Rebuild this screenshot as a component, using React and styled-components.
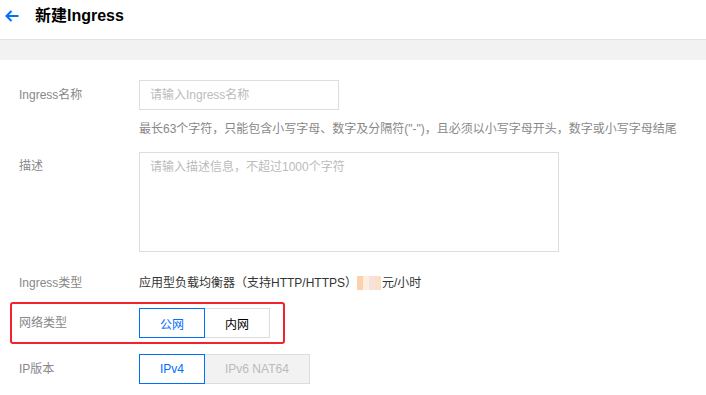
import styled, { createGlobalStyle } from "styled-components";

const GlobalStyle = createGlobalStyle`
  body {
    margin: 0;
    background: #fff;
    font-family: "Liberation Sans", Arial, "Noto Sans CJK SC", sans-serif;
    font-size: 12px;
    color: #333;
  }
`;

const Page = styled.div`
  width: 706px;
  height: 395px;
  overflow: hidden;
`;

const Header = styled.div`
  height: 40px;
  box-sizing: border-box;
  border-bottom: 1px solid #e2e2e2;
  display: flex;
  align-items: flex-start;
  padding: 8px 0 0 5px;
  gap: 16px;
`;

const BackIcon = styled.svg`
  width: 14px;
  height: 14px;
  margin-top: 1px;
`;

const Title = styled.h1`
  margin: 0;
  font-size: 16px;
  line-height: 16px;
  font-weight: bold;
  color: #000;
`;

const Band = styled.div`
  height: 20px;
  background: #f2f2f2;
`;

const Form = styled.div`
  padding: 20px 0 0 19px;
  display: flex;
  flex-direction: column;
`;

const Row = styled.div`
  display: flex;
  align-items: ${({ $top }) => ($top ? "flex-start" : "center")};
  margin-top: ${({ $mt }) => $mt || 0}px;
  min-height: ${({ $h }) => $h || 30}px;
`;

const Label = styled.div`
  width: 120px;
  flex-shrink: 0;
  color: #888;
  line-height: 18px;
  padding-top: ${({ $pt }) => $pt || 0}px;
`;

const Input = styled.input`
  width: 200px;
  height: 30px;
  box-sizing: border-box;
  border: 1px solid #ddd;
  padding: 0 10px;
  font: inherit;
  outline: none;
  &::placeholder {
    color: #bbb;
  }
`;

const Help = styled.div`
  margin: 10px 0 0 120px;
  line-height: 18px;
  color: #888;
`;

const TextArea = styled.textarea`
  width: 420px;
  height: 100px;
  box-sizing: border-box;
  border: 1px solid #ddd;
  padding: 5px 10px;
  font: inherit;
  line-height: 18px;
  resize: none;
  outline: none;
  &::placeholder {
    color: #bbb;
  }
`;

const Value = styled.div`
  color: #333;
  line-height: 18px;
  display: flex;
  align-items: center;
`;

const Price = styled.span`
  display: inline-block;
  width: 24px;
  height: 14px;
  margin: 0 1px 0 0;
  background: linear-gradient(
    90deg,
    #fcd2ae 0 25%,
    #fdeee0 25% 50%,
    #f6e2dc 50% 75%,
    #fbe0c8 75% 100%
  );
  filter: blur(0.6px);
`;

const Highlight = styled.div`
  margin: 8px 0 0 -9px;
  width: 275px;
  box-sizing: border-box;
  border: 2px solid #f5222d;
  border-radius: 3px;
  padding: 4px 7px;
`;

const Group = styled.div`
  display: flex;
`;

const Option = styled.button`
  height: 30px;
  min-width: 66px;
  padding: 0 20px;
  box-sizing: border-box;
  font: inherit;
  cursor: pointer;
  margin-left: -1px;
  background: ${({ $disabled }) => ($disabled ? "#f2f2f2" : "#fff")};
  color: ${({ $active, $disabled }) =>
    $active ? "#006eff" : $disabled ? "#bbb" : "#000"};
  border: 1px solid ${({ $active }) => ($active ? "#006eff" : "#ddd")};
  position: relative;
  z-index: ${({ $active }) => ($active ? 1 : 0)};
  &:first-child {
    margin-left: 0;
  }
`;

export default function App() {
  return (
    <Page>
      <GlobalStyle />
      <Header>
        <BackIcon viewBox="0 0 14 14" fill="none" stroke="#006eff" strokeWidth="2">
          <path d="M13.5 7H1.5M6.5 2L1.5 7l5 5" />
        </BackIcon>
        <Title>新建Ingress</Title>
      </Header>
      <Band />
      <Form>
        <Row>
          <Label>Ingress名称</Label>
          <Input placeholder="请输入Ingress名称" />
        </Row>
        <Help>
          最长63个字符，只能包含小写字母、数字及分隔符("-")，且必须以小写字母开头，数字或小写字母结尾
        </Help>
        <Row $top $mt={14} $h={100}>
          <Label $pt={5}>描述</Label>
          <TextArea placeholder="请输入描述信息，不超过1000个字符" />
        </Row>
        <Row $mt={20} $h={22}>
          <Label>Ingress类型</Label>
          <Value>
            应用型负载均衡器（支持HTTP/HTTPS）<Price />元/小时
          </Value>
        </Row>
        <Highlight>
          <Row>
            <Label>网络类型</Label>
            <Group>
              <Option $active>公网</Option>
              <Option>内网</Option>
            </Group>
          </Row>
        </Highlight>
        <Row $mt={10}>
          <Label>IP版本</Label>
          <Group>
            <Option $active>IPv4</Option>
            <Option $disabled>IPv6 NAT64</Option>
          </Group>
        </Row>
      </Form>
    </Page>
  );
}
